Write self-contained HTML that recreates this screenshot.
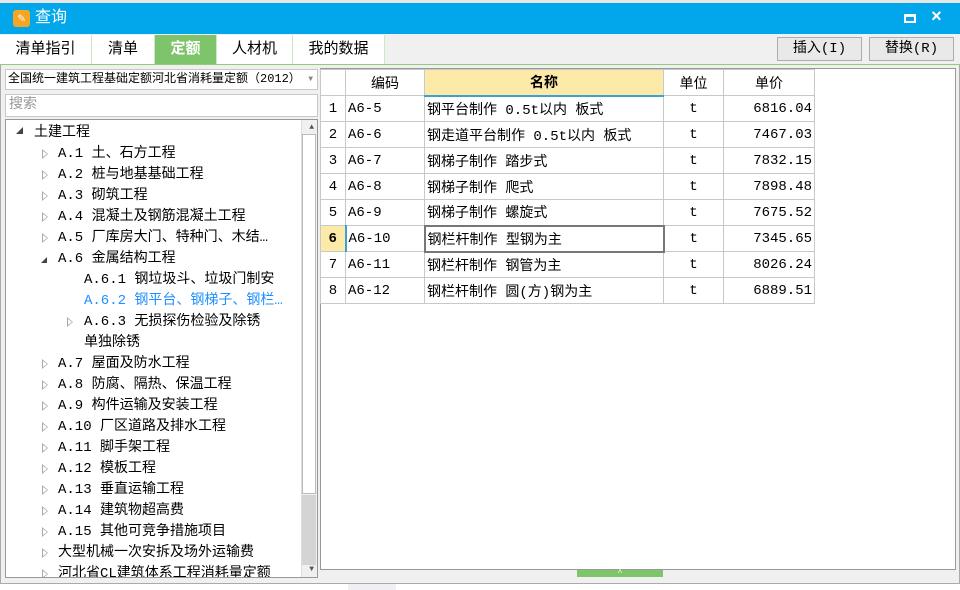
<!DOCTYPE html>
<html><head><meta charset="utf-8"><style>
*{margin:0;padding:0;box-sizing:border-box}
body{width:960px;height:590px;background:#fff;font-family:"Liberation Mono","Noto Sans CJK SC",monospace;font-size:14px;color:#000;position:relative;overflow:hidden}
.abs{position:absolute}
#win{left:0;top:3px;width:960px;height:581px;background:#f0f0f0;border:1px solid #aaa}
#title{left:0;top:3px;width:960px;height:31px;background:#02a6ea;color:#fff;font-size:16px}
.tab{top:35px;height:29px;line-height:29px;text-align:center;font-size:15px;border-right:1px solid #cde8c4;background:#fff}
.btn{top:37px;height:24px;border:1px solid #adadad;background:#e9e9e9;text-align:center;line-height:22px;font-size:14px}
.tr{position:absolute;height:21px;line-height:21px;white-space:nowrap}
.ex{position:absolute;width:0;height:0;border-top:5px solid transparent;border-bottom:5px solid transparent;border-left:6px solid #aaa}
.ex:after{content:"";position:absolute;left:-5px;top:-3px;border-top:3px solid transparent;border-bottom:3px solid transparent;border-left:4px solid #fff}
table{border-collapse:collapse;position:absolute;left:320px;top:69px}
td{border:1px solid #c8c8c8;height:26px;padding:0 2px;white-space:nowrap}
</style></head><body>
<div class="abs" style="left:0;top:0;width:960px;height:3px;background:#e6e6e6"></div>
<div id="win" class="abs"></div>
<div id="title" class="abs">
 <div class="abs" style="left:13px;top:7px;width:17px;height:17px;background:#f5a623;border-radius:3px;color:#fff;font-size:13px;line-height:17px;text-align:center;font-weight:bold">✎</div>
 <div class="abs" style="left:35px;top:0;line-height:31px">查询</div>
 <div class="abs" style="left:904px;top:11px;width:12px;height:9px;border:2px solid #fff;border-top-width:3px"></div>
 <div class="abs" style="left:931px;top:0;line-height:31px;font-size:18px;font-weight:bold">×</div>
</div>
<div class="abs" style="left:0;top:34px;width:960px;height:31px;background:#f0f0f0;border-bottom:1px solid #8fcc7c"></div>
<div class="abs tab" style="left:0;width:92px">清单指引</div>
<div class="abs tab" style="left:92px;width:63px">清单</div>
<div class="abs tab" style="left:155px;width:62px;background:#7ec46a;color:#fff;font-weight:bold">定额</div>
<div class="abs tab" style="left:217px;width:76px">人材机</div>
<div class="abs tab" style="left:293px;width:92px">我的数据</div>
<div class="abs btn" style="left:777px;width:85px">插入(I)</div>
<div class="abs btn" style="left:869px;width:85px">替换(R)</div>

<div class="abs" style="left:5px;top:69px;width:313px;height:21px;background:#fff;border:1px solid #c8c8c8;font-size:12px;line-height:19px;padding-left:2px;white-space:nowrap;overflow:hidden">全国统一建筑工程基础定额河北省消耗量定额（2012）<span style="position:absolute;right:4px;top:0;color:#888;font-size:8px">▼</span></div>
<div class="abs" style="left:5px;top:94px;width:313px;height:23px;background:#fff;border:1px solid #c8c8c8;color:#999;line-height:21px;padding-left:3px">搜索</div>
<div class="abs" style="left:5px;top:119px;width:313px;height:459px;background:#fff;border:1px solid #999;overflow:hidden">
 <div class="abs" style="right:0;top:0;width:16px;height:457px;background:#f0f0f0;border-left:1px solid #ddd"></div>
 <div class="abs" style="right:1px;top:14px;width:14px;height:360px;background:#fff;border:1px solid #bbb"></div>
 <div class="abs" style="right:1px;top:375px;width:14px;height:70px;background:#d4d4d4"></div>
 <div class="abs" style="right:3px;top:3px;font-size:8px;color:#555">▲</div>
 <div class="abs" style="right:3px;top:445px;font-size:8px;color:#555">▼</div>
</div>
<div class="abs" style="left:5px;top:121px;width:296px;height:456px;overflow:hidden">
<div class="abs" style="left:11px;top:6px;border-left:7px solid transparent;border-bottom:7px solid #444"></div>
<div class="tr" style="left:29px;top:2px">土建工程</div>
<div class="ex" style="left:37px;top:28px"></div><div class="tr" style="left:53px;top:23px">A.1 土、石方工程</div>
<div class="ex" style="left:37px;top:49px"></div><div class="tr" style="left:53px;top:44px">A.2 桩与地基基础工程</div>
<div class="ex" style="left:37px;top:70px"></div><div class="tr" style="left:53px;top:65px">A.3 砌筑工程</div>
<div class="ex" style="left:37px;top:91px"></div><div class="tr" style="left:53px;top:86px">A.4 混凝土及钢筋混凝土工程</div>
<div class="ex" style="left:37px;top:112px"></div><div class="tr" style="left:53px;top:107px">A.5 厂库房大门、特种门、木结…</div>
<div class="abs" style="left:36px;top:136px;border-left:6px solid transparent;border-bottom:6px solid #444"></div>
<div class="tr" style="left:53px;top:128px">A.6 金属结构工程</div>
<div class="tr" style="left:79px;top:149px">A.6.1 钢垃圾斗、垃圾门制安</div>
<div class="tr" style="left:79px;top:170px;color:#1e90ff">A.6.2 钢平台、钢梯子、钢栏…</div>
<div class="ex" style="left:62px;top:196px"></div><div class="tr" style="left:79px;top:191px">A.6.3 无损探伤检验及除锈</div>
<div class="tr" style="left:79px;top:212px">单独除锈</div>
<div class="ex" style="left:37px;top:238px"></div><div class="tr" style="left:53px;top:233px">A.7 屋面及防水工程</div>
<div class="ex" style="left:37px;top:259px"></div><div class="tr" style="left:53px;top:254px">A.8 防腐、隔热、保温工程</div>
<div class="ex" style="left:37px;top:280px"></div><div class="tr" style="left:53px;top:275px">A.9 构件运输及安装工程</div>
<div class="ex" style="left:37px;top:301px"></div><div class="tr" style="left:53px;top:296px">A.10 厂区道路及排水工程</div>
<div class="ex" style="left:37px;top:322px"></div><div class="tr" style="left:53px;top:317px">A.11 脚手架工程</div>
<div class="ex" style="left:37px;top:343px"></div><div class="tr" style="left:53px;top:338px">A.12 模板工程</div>
<div class="ex" style="left:37px;top:364px"></div><div class="tr" style="left:53px;top:359px">A.13 垂直运输工程</div>
<div class="ex" style="left:37px;top:385px"></div><div class="tr" style="left:53px;top:380px">A.14 建筑物超高费</div>
<div class="ex" style="left:37px;top:406px"></div><div class="tr" style="left:53px;top:401px">A.15 其他可竞争措施项目</div>
<div class="ex" style="left:37px;top:427px"></div><div class="tr" style="left:53px;top:422px">大型机械一次安拆及场外运输费</div>
<div class="ex" style="left:37px;top:448px"></div><div class="tr" style="left:53px;top:443px">河北省CL建筑体系工程消耗量定额</div>
</div>

<div class="abs" style="left:320px;top:68px;width:636px;height:502px;background:#fff;border:1px solid #999"></div>
<table>
<tr><td style="width:25px"></td><td style="width:79px;text-align:center">编码</td><td style="width:239px;text-align:center;background:#fde9a8;font-weight:bold;border-bottom:2px solid #3aa0d8">名称</td><td style="width:60px;text-align:center">单位</td><td style="width:91px;text-align:center">单价</td></tr>
<tr><td style="text-align:center">1</td><td>A6-5</td><td>钢平台制作 0.5t以内 板式</td><td style="text-align:center">t</td><td style="text-align:right">6816.04</td></tr>
<tr><td style="text-align:center">2</td><td>A6-6</td><td>钢走道平台制作 0.5t以内 板式</td><td style="text-align:center">t</td><td style="text-align:right">7467.03</td></tr>
<tr><td style="text-align:center">3</td><td>A6-7</td><td>钢梯子制作 踏步式</td><td style="text-align:center">t</td><td style="text-align:right">7832.15</td></tr>
<tr><td style="text-align:center">4</td><td>A6-8</td><td>钢梯子制作 爬式</td><td style="text-align:center">t</td><td style="text-align:right">7898.48</td></tr>
<tr><td style="text-align:center">5</td><td>A6-9</td><td>钢梯子制作 螺旋式</td><td style="text-align:center">t</td><td style="text-align:right">7675.52</td></tr>
<tr><td style="text-align:center;background:#fde9a8;font-weight:bold;border-right:2px solid #3aa0d8">6</td><td>A6-10</td><td style="border:2px solid #777">钢栏杆制作 型钢为主</td><td style="text-align:center">t</td><td style="text-align:right">7345.65</td></tr>
<tr><td style="text-align:center">7</td><td>A6-11</td><td>钢栏杆制作 钢管为主</td><td style="text-align:center">t</td><td style="text-align:right">8026.24</td></tr>
<tr><td style="text-align:center">8</td><td>A6-12</td><td>钢栏杆制作 圆(方)钢为主</td><td style="text-align:center">t</td><td style="text-align:right">6889.51</td></tr>
</table>
<div class="abs" style="left:577px;top:570px;width:86px;height:7px;background:#7ec46a;color:#fff;font-size:8px;line-height:7px;text-align:center">^</div>
<div class="abs" style="left:348px;top:584px;width:48px;height:6px;background:#eef0f4"></div>
</body></html>
